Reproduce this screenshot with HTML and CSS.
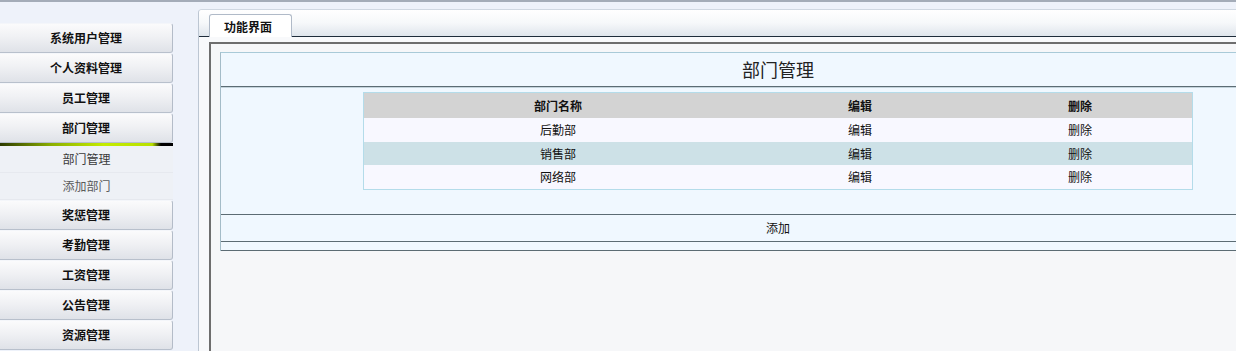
FILE: index.html
```html
<!DOCTYPE html>
<html lang="zh-CN">
<head>
    <meta charset="UTF-8">
    <title>部门管理</title>
    <link rel="stylesheet" href="styles.css">
</head>
<body>
    <div class="page">
        <div class="sidebar">
            <div class="menu-btn">系统用户管理</div>
            <div class="menu-btn">个人资料管理</div>
            <div class="menu-btn">员工管理</div>
            <div class="menu-btn">部门管理</div>
            <div class="menu-sep"></div>
            <div class="submenu">
                <div class="sub-item">部门管理</div>
                <div class="sub-item">添加部门</div>
            </div>
            <div class="menu-btn">奖惩管理</div>
            <div class="menu-btn">考勤管理</div>
            <div class="menu-btn">工资管理</div>
            <div class="menu-btn">公告管理</div>
            <div class="menu-btn">资源管理</div>
        </div>

        <div class="main">
            <div class="tab-bar">
                <div class="tab">功能界面</div>
            </div>
            <div class="main-body">
                <div class="frame">
                    <div class="panel">
                        <div class="panel-title">部门管理</div>
                        <div class="panel-content">
                            <table class="dept-table">
                                <thead>
                                    <tr><th class="col-name">部门名称</th><th class="col-edit">编辑</th><th>删除</th></tr>
                                </thead>
                                <tbody>
                                    <tr><td>后勤部</td><td>编辑</td><td>删除</td></tr>
                                    <tr class="alt"><td>销售部</td><td>编辑</td><td>删除</td></tr>
                                    <tr><td>网络部</td><td>编辑</td><td>删除</td></tr>
                                </tbody>
                            </table>
                        </div>
                        <div class="panel-add">添加</div>
                        <div class="panel-foot"></div>
                    </div>
                </div>
            </div>
        </div>
    </div>
</body>
</html>
```

FILE: styles.css
```css
html, body { margin: 0; padding: 0; height: 100%; overflow: hidden; }
body { background: #eef2fa; border-top: 2px solid #a4acb8; font-family: "Noto Sans CJK SC", "Liberation Sans", sans-serif; font-size: 12px; color: #111; }

.page { display: flex; height: 100%; }

.sidebar { width: 198px; flex: none; padding-top: 21px; }
.menu-btn { width: 172px; height: 28px; line-height: 28px; text-align: center; font-weight: bold; color: #111;
    background: linear-gradient(to bottom, #fbfbfc 0%, #f0f1f4 45%, #dfe2e8 100%);
    border-top: 1px solid #f4f6fa; border-bottom: 1px solid #b8c0cc; border-right: 1px solid #b4bcc8;
    border-radius: 0 3px 3px 0; }
.menu-sep { width: 173px; height: 3px; background: linear-gradient(to right, #2c3a00 0%, #8cb000 30%, #c4ec00 60%, #b8e000 88%, #000 93%, #000 100%); }
.submenu { width: 173px; background: #eef1f6; }
.sub-item { height: 26px; line-height: 26px; text-align: center; color: #3a3a3a; border-bottom: 1px solid #e6e9ef; }
.sub-item + .sub-item { color: #5a5a5a; }

.main { flex: 1; margin-top: 7px; border-left: 1px solid #bcc6d2; border-top: 1px solid #d0d8e2; border-top-left-radius: 4px; background: #f3f5f9; overflow: hidden; display: flex; flex-direction: column; }
.tab-bar { flex: none; height: 26px; display: flex; align-items: flex-end; padding-left: 10px;
    background: linear-gradient(to bottom, #ffffff 0%, #f6f8fa 50%, #dfe5ec 100%);
    border-bottom: 1px solid #1e2c3a; }
.tab { width: 83px; height: 23px; line-height: 24px; margin-bottom: -1px; padding-left: 14px; box-sizing: border-box;
    background: #fff; border: 1px solid #b0bac8; border-bottom: none; border-radius: 3px 3px 0 0; font-weight: bold; }
.main-body { flex: 1; padding: 5px 0 0 10px; background: #f8f9fb; }
.frame { width: 1140px; height: 400px; border-top: 2px solid #6e6e6e; border-left: 2px solid #6e6e6e; background: #f6f7f9; padding: 8px 0 0 9px; box-sizing: border-box; }

.panel { width: 1114px; border: 1px solid #a9cad8; border-left-color: #a4bcc8; border-bottom: none; background: #f0f8ff; }
.panel-title { height: 33px; line-height: 33px; text-align: center; font-size: 18px; color: #222; border-bottom: 1px solid #5c6c74; }
.panel-content { height: 127px; border-top: 1px solid #c4d4dc; padding-top: 4px; box-sizing: border-box; }
.panel-add { height: 26px; line-height: 26px; text-align: center; border-top: 1px solid #5c6c74; border-bottom: 1px solid #5c6c74; }
.panel-foot { height: 8px; border-bottom: 1px solid #5c6c74; }

.dept-table { width: 830px; margin: 0 auto; border-collapse: collapse; border: 1px solid #b4dcea; }
.dept-table th { height: 25px; background: #d3d3d3; font-weight: bold; text-align: center; padding: 0; }
.dept-table td { height: 23.5px; background: #f8f8ff; text-align: center; padding: 0; }
.dept-table tr.alt td { background: #cde1e7; }
.col-name { width: 388px; }
.col-edit { width: 216px; }
```
